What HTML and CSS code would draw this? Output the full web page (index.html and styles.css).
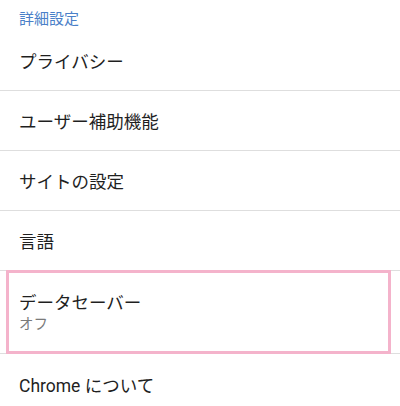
FILE: index.html
```html
<!DOCTYPE html>
<html lang="ja">
<head>
<meta charset="utf-8">
<link rel="stylesheet" href="styles.css">
</head>
<body>
<div class="list">
  <div class="header">詳細設定</div>
  <div class="row">プライバシー</div>
  <div class="row">ユーザー補助機能</div>
  <div class="row">サイトの設定</div>
  <div class="row">言語</div>
  <div class="row row-two highlighted">
    <div class="title">データセーバー</div>
    <div class="sub">オフ</div>
  </div>
  <div class="row row-last">Chrome について</div>
</div>
</body>
</html>
```
FILE: styles.css
```css
html, body {
  margin: 0;
  padding: 0;
  background: #ffffff;
}
body {
  font-family: Roboto, "Noto Sans CJK JP", sans-serif;
  color: #212121;
  width: 400px;
  height: 406px;
  overflow: hidden;
}
.list {
  display: flex;
  flex-direction: column;
}
.header {
  height: 31px;
  box-sizing: border-box;
  padding: 3px 0 0 19px;
  display: flex;
  align-items: center;
  font-size: 15px;
  color: #4a80c8;
}
.row {
  height: 60px;
  box-sizing: border-box;
  border-bottom: 1px solid #dedede;
  padding-left: 19px;
  display: flex;
  align-items: center;
  font-size: 17.5px;
  color: #1f1f1f;
}
.row-two {
  height: 83px;
  flex-direction: column;
  align-items: flex-start;
  justify-content: center;
  position: relative;
  padding-top: 2px;
}
.title {
  font-size: 17.5px;
  line-height: 24px;
}
.sub {
  font-size: 14.5px;
  line-height: 20px;
  color: #7a7a7a;
}
.highlighted::after {
  content: "";
  position: absolute;
  left: 6px;
  right: 9px;
  top: -1px;
  bottom: -1px;
  border: 3px solid #f4b3cb;
}
.row-last {
  border-bottom: none;
}
```
